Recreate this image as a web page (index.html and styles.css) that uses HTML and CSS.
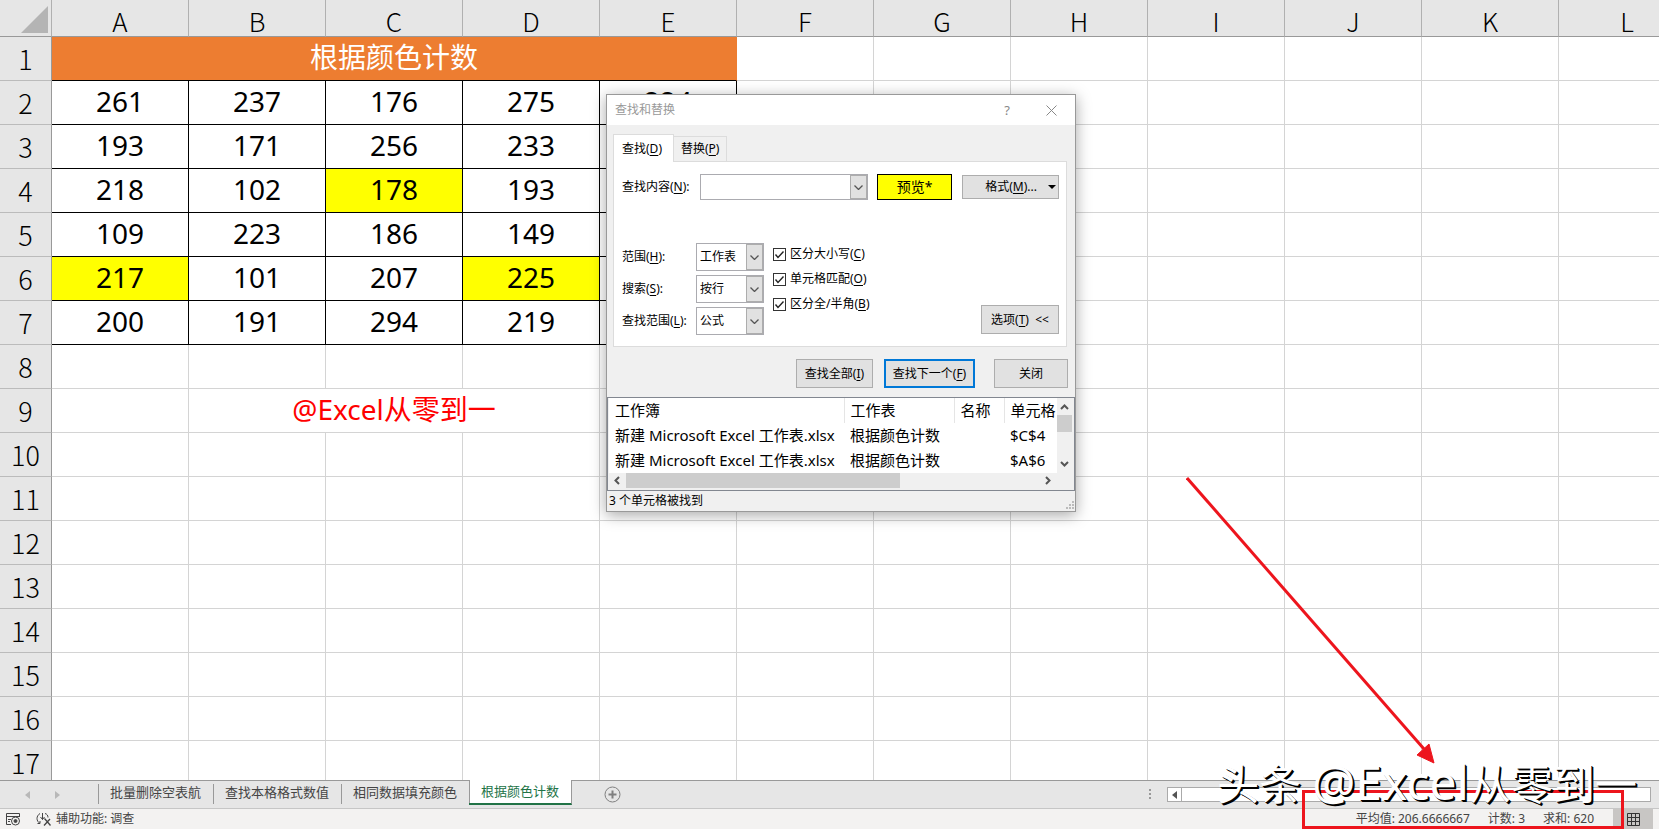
FILE: index.html
```html
<!DOCTYPE html>
<html lang="zh-CN">
<head>
<meta charset="utf-8">
<title>根据颜色计数</title>
<link rel="stylesheet" href="styles.css">
</head>
<body>
<div class="app">
  <main class="sheet">
    <table class="grid">
      <colgroup><col class="col-head"><col span="12" class="col-data"></colgroup>
      <thead>
        <tr>
          <th class="corner"><svg width="51" height="36" viewBox="0 0 51 36" aria-hidden="true"><path d="M48 6V33H21Z" fill="#b4b4b4"/></svg></th>
          <th>A</th><th>B</th><th>C</th><th>D</th><th>E</th><th>F</th><th>G</th><th>H</th><th>I</th><th>J</th><th>K</th><th>L</th>
        </tr>
      </thead>
      <tbody>
        <tr><th>1</th><td colspan="5" class="title">根据颜色计数</td><td></td><td></td><td></td><td></td><td></td><td></td><td></td></tr>
        <tr class="data"><th>2</th><td>261</td><td>237</td><td>176</td><td>275</td><td>224</td><td></td><td></td><td></td><td></td><td></td><td></td><td></td></tr>
        <tr class="data"><th>3</th><td>193</td><td>171</td><td>256</td><td>233</td><td></td><td></td><td></td><td></td><td></td><td></td><td></td><td></td></tr>
        <tr class="data"><th>4</th><td>218</td><td>102</td><td class="hit">178</td><td>193</td><td></td><td></td><td></td><td></td><td></td><td></td><td></td><td></td></tr>
        <tr class="data"><th>5</th><td>109</td><td>223</td><td>186</td><td>149</td><td></td><td></td><td></td><td></td><td></td><td></td><td></td><td></td></tr>
        <tr class="data"><th>6</th><td class="hit">217</td><td>101</td><td>207</td><td class="hit">225</td><td></td><td></td><td></td><td></td><td></td><td></td><td></td><td></td></tr>
        <tr class="data"><th>7</th><td>200</td><td>191</td><td>294</td><td>219</td><td></td><td></td><td></td><td></td><td></td><td></td><td></td><td></td></tr>
        <tr><th>8</th><td></td><td></td><td></td><td></td><td></td><td></td><td></td><td></td><td></td><td></td><td></td><td></td></tr>
        <tr><th>9</th><td></td><td colspan="3" class="author">@Excel从零到一</td><td></td><td></td><td></td><td></td><td></td><td></td><td></td><td></td></tr>
        <tr><th>10</th><td></td><td></td><td></td><td></td><td></td><td></td><td></td><td></td><td></td><td></td><td></td><td></td></tr>
        <tr><th>11</th><td></td><td></td><td></td><td></td><td></td><td></td><td></td><td></td><td></td><td></td><td></td><td></td></tr>
        <tr><th>12</th><td></td><td></td><td></td><td></td><td></td><td></td><td></td><td></td><td></td><td></td><td></td><td></td></tr>
        <tr><th>13</th><td></td><td></td><td></td><td></td><td></td><td></td><td></td><td></td><td></td><td></td><td></td><td></td></tr>
        <tr><th>14</th><td></td><td></td><td></td><td></td><td></td><td></td><td></td><td></td><td></td><td></td><td></td><td></td></tr>
        <tr><th>15</th><td></td><td></td><td></td><td></td><td></td><td></td><td></td><td></td><td></td><td></td><td></td><td></td></tr>
        <tr><th>16</th><td></td><td></td><td></td><td></td><td></td><td></td><td></td><td></td><td></td><td></td><td></td><td></td></tr>
        <tr><th>17</th><td></td><td></td><td></td><td></td><td></td><td></td><td></td><td></td><td></td><td></td><td></td><td></td></tr>
      </tbody>
    </table>
  </main>

  <nav class="tabs">
    <div class="tab-arrows">
      <svg width="5" height="8" viewBox="0 0 5 8" aria-hidden="true"><path d="M5 0V8L0 4Z" fill="#b8b8b8"/></svg>
      <svg width="5" height="8" viewBox="0 0 5 8" aria-hidden="true"><path d="M0 0V8L5 4Z" fill="#b8b8b8"/></svg>
    </div>
    <button class="tab">批量删除空表航</button>
    <button class="tab">查找本格格式数值</button>
    <button class="tab">相同数据填充颜色</button>
    <button class="tab active">根据颜色计数</button>
    <button class="add" aria-label="新工作表"><svg width="17" height="17" viewBox="0 0 17 17" fill="none" stroke="#808080"><circle cx="8.500" cy="8.500" r="7.500"/><path d="M8.500 4.500V12.500M4.500 8.500H12.500" stroke-width="2"/></svg></button>
    <div class="hscroll">
      <svg width="3" height="11" viewBox="0 0 3 11" fill="#999" aria-hidden="true"><path d="M0 0h2v2H0zM0 4h2v2H0zM0 8h2v2H0z"/></svg>
      <div class="hscroll-bar">
        <button class="hscroll-left" aria-label="向左滚动"><svg width="5" height="8" viewBox="0 0 5 8"><path d="M5 0V8L0 4Z" fill="#555"/></svg></button>
      </div>
    </div>
  </nav>

  <footer class="status">
    <svg class="record" width="15" height="13" viewBox="0 0 15 13" fill="none" stroke="#444" aria-hidden="true"><path d="M5 11.500H.5V.5H13.500V4M.5 3.500H13M2 6.500H5M2 8.500H4"/><circle cx="9.500" cy="8" r="4"/><circle cx="9.500" cy="8" r="1.500" fill="#444"/></svg>
    <svg class="access" width="16" height="15" viewBox="0 0 16 15" fill="none" stroke="#444" aria-hidden="true"><path d="M4 1.500C0 4 0 9 4 11.500M4 11.500H1.500M4 11.500V9M6.500 1V7.500M4.500 5L6.500 7.500L8.500 5M9 1.500C11 2 12 3.500 12 5.500"/><path d="M8.500 6.500L14.500 13.500M14 7L8 13.500" stroke-width="1.300"/></svg>
    <span>辅助功能: 调查</span>
    <div class="stats"><span>平均值: 206.6666667</span><span>计数: 3</span><span>求和: 620</span></div>
    <button class="view" aria-label="普通视图"><svg width="13" height="13" viewBox="0 0 13 13" fill="none" stroke="#333"><path d="M.5 .5H12.500V12.500H.5ZM.5 4.500H12.500M.5 8.500H12.500M4.500 .5V12.500M8.500 .5V12.500"/></svg></button>
  </footer>

  <section class="dialog" role="dialog" aria-label="查找和替换">
    <header class="dlg-title">
      <span>查找和替换</span>
      <button aria-label="帮助">?</button>
      <button aria-label="关闭窗口"><svg width="11" height="11" viewBox="0 0 11 11" stroke="#888"><path d="M.5 .5L10.500 10.500M10.500 .5L.5 10.500"/></svg></button>
    </header>
    <div class="dlg-tabs">
      <button class="dlg-tab on">查找(<u>D</u>)</button>
      <button class="dlg-tab">替换(<u>P</u>)</button>
    </div>
    <div class="panel">
      <div class="find-row">
        <label for="what">查找内容(<u>N</u>):</label>
        <div class="combo wide"><input id="what" type="text"><button aria-label="展开"><svg width="9" height="5" viewBox="0 0 9 5" fill="none" stroke="#555" stroke-width="1.300"><path d="M.5 .5L4.500 4.500L8.500 .5"/></svg></button></div>
        <div class="preview">预览*</div>
        <button class="btn format"><span>格式(<u>M</u>)...</span><svg width="8" height="4" viewBox="0 0 8 4" aria-hidden="true"><path d="M0 0H8L4 4Z"/></svg></button>
      </div>
      <div class="options">
        <div class="fields">
          <label for="within">范围(<u>H</u>):</label>
          <div class="combo"><select id="within"><option>工作表</option></select><span class="chev"><svg width="9" height="5" viewBox="0 0 9 5" fill="none" stroke="#555" stroke-width="1.300"><path d="M.5 .5L4.500 4.500L8.500 .5"/></svg></span></div>
          <label for="search">搜索(<u>S</u>):</label>
          <div class="combo"><select id="search"><option>按行</option></select><span class="chev"><svg width="9" height="5" viewBox="0 0 9 5" fill="none" stroke="#555" stroke-width="1.300"><path d="M.5 .5L4.500 4.500L8.500 .5"/></svg></span></div>
          <label for="lookin">查找范围(<u>L</u>):</label>
          <div class="combo"><select id="lookin"><option>公式</option></select><span class="chev"><svg width="9" height="5" viewBox="0 0 9 5" fill="none" stroke="#555" stroke-width="1.300"><path d="M.5 .5L4.500 4.500L8.500 .5"/></svg></span></div>
        </div>
        <div class="checks">
          <label><span class="tick"><input type="checkbox" checked><svg width="13" height="13" viewBox="0 0 13 13" fill="none" stroke="#222" stroke-width="1.400"><path d="M2.500 6.500L5 9.500L10.500 3.500"/></svg></span>区分大小写(<u>C</u>)</label>
          <label><span class="tick"><input type="checkbox" checked><svg width="13" height="13" viewBox="0 0 13 13" fill="none" stroke="#222" stroke-width="1.400"><path d="M2.500 6.500L5 9.500L10.500 3.500"/></svg></span>单元格匹配(<u>O</u>)</label>
          <label><span class="tick"><input type="checkbox" checked><svg width="13" height="13" viewBox="0 0 13 13" fill="none" stroke="#222" stroke-width="1.400"><path d="M2.500 6.500L5 9.500L10.500 3.500"/></svg></span>区分全/半角(<u>B</u>)</label>
        </div>
        <button class="btn toggle"><span>选项(<u>T</u>)  &lt;&lt;</span></button>
      </div>
    </div>
    <div class="actions">
      <button class="btn all"><span>查找全部(<u>I</u>)</span></button>
      <button class="btn next"><span>查找下一个(<u>F</u>)</span></button>
      <button class="btn close">关闭</button>
    </div>
    <div class="results">
      <table>
        <thead><tr><th class="c-book">工作簿</th><th class="c-sheet">工作表</th><th class="c-name">名称</th><th>单元格</th></tr></thead>
        <tbody>
          <tr><td>新建 Microsoft Excel 工作表.xlsx</td><td>根据颜色计数</td><td></td><td>$C$4</td></tr>
          <tr><td>新建 Microsoft Excel 工作表.xlsx</td><td>根据颜色计数</td><td></td><td>$A$6</td></tr>
        </tbody>
      </table>
      <div class="vbar">
        <svg width="9" height="6" viewBox="0 0 9 6" fill="none" stroke="#555" stroke-width="2"><path d="M1 5L4.500 1.500L8 5"/></svg>
        <div class="vthumb"></div>
        <svg class="down" width="9" height="6" viewBox="0 0 9 6" fill="none" stroke="#555" stroke-width="2"><path d="M1 1L4.500 4.500L8 1"/></svg>
      </div>
      <div class="hbar">
        <svg width="6" height="9" viewBox="0 0 6 9" fill="none" stroke="#555" stroke-width="2"><path d="M5 1L1.500 4.500L5 8"/></svg>
        <div class="hthumb"></div>
        <svg class="right" width="6" height="9" viewBox="0 0 6 9" fill="none" stroke="#555" stroke-width="2"><path d="M1 1L4.500 4.500L1 8"/></svg>
      </div>
    </div>
    <div class="dlg-status"><span>3 个单元格被找到</span><svg width="8" height="8" viewBox="0 0 8 8" fill="#bbb" aria-hidden="true"><path d="M6 0h2v2H6zM3 3h2v2H3zM6 3h2v2H6zM0 6h2v2H0zM3 6h2v2H3zM6 6h2v2H6z"/></svg></div>
  </section>

  <svg class="arrow" width="252" height="288" viewBox="0 0 252 288" aria-hidden="true"><path d="M1 1L238 272" stroke="#ed151d" stroke-width="3"/><path d="M248 286L231 278L243 267Z" fill="#ed151d" stroke="#ed151d"/></svg>
  <div class="callout"></div>
  <div class="watermark">头条 <span>@Excel</span>从零到一</div>
</div>
</body>
</html>
```
FILE: styles.css
```css
* { box-sizing: border-box; }
body {
  margin: 0;
  font: 12px/16px "Noto Sans", "Noto Sans CJK SC", sans-serif;
  color: #000;
}
button, input, select { font: inherit; color: inherit; margin: 0; padding: 0; border: 0; border-radius: 0; background: none; }
svg { display: block; flex: none; }

.app { position: relative; display: flex; flex-direction: column; height: 100vh; overflow: hidden; }

/* Worksheet */
.sheet { flex: 1; min-height: 0; overflow: hidden; background: #fff; }
.grid { table-layout: fixed; width: 1696px; border-collapse: separate; border-spacing: 0; font-size: 28px; line-height: 40px; }
.col-head { width: 52px; }
.col-data { width: 137px; }
.grid th {
  padding: 0;
  background: #e6e6e6;
  font-family: "Noto Sans CJK SC", sans-serif;
  font-weight: 300;
  font-size: 27px;
  line-height: 36px;
  border-right: 1px solid #999;
  border-bottom: 1px solid #bbb;
}
.grid thead th { height: 37px; padding-top: 5px; font-size: 26px; line-height: 31px; border-bottom-color: #999; border-right-color: #b0b0b0; }
.grid thead .corner { padding: 0; }
.grid tbody tr { height: 44px; }
.grid td { padding: 0 0 3px; text-align: center; border-right: 1px solid #d4d4d4; border-bottom: 1px solid #d4d4d4; }
.grid .title { background: #ed7d31; color: #fff; border-color: #000; border-right-color: #ed7d31; }
.grid .data td:nth-child(-n+6) { border-color: #000; }
.grid .hit { background: #ff0; }
.grid .author { color: #f00; }

/* Sheet tabs */
.tabs { display: flex; height: 29px; background: #e6e6e6; border-top: 1px solid #999; border-bottom: 1px solid #c6c6c6; }
.tab-arrows { display: flex; gap: 25px; align-items: center; width: 98px; padding-left: 25px; }
.tab { position: relative; height: 24px; padding: 0 12px 2px; font-size: 13px; line-height: 20px; color: #444; white-space: nowrap; }
.tab::before { content: ""; position: absolute; left: 0; top: 3px; height: 20px; border-left: 1px solid #999; }
.tab.active { background: #fff; color: #217346; border-bottom: 2px solid #217346; border-right: 1px solid #999; margin-top: -1px; height: 25px; }
.tab.active::before { top: 0; height: 23px; }
.add { margin: 5px 0 0 32px; align-self: flex-start; }
.hscroll { display: flex; align-items: center; gap: 15px; width: 510px; margin-left: auto; }
.hscroll-bar { flex: 1; height: 15px; margin-right: 8px; border: 1px solid #aaa; background: #fff; }
.hscroll-left { display: flex; align-items: center; justify-content: center; width: 14px; height: 13px; border-right: 1px solid #aaa; }

/* Status bar */
.status { display: flex; align-items: center; height: 20px; background: #f3f2f1; color: #444; white-space: nowrap; }
.record { margin-left: 6px; }
.access { margin: 0 4px 0 15px; }
.stats { display: flex; gap: 18px; margin-left: auto; }
.view { display: flex; align-items: center; justify-content: center; width: 40px; height: 20px; margin: 0 6px 0 19px; background: #c8c6c4; }

/* Find and replace window */
.dialog {
  position: absolute; left: 606px; top: 94px; width: 470px;
  background: #f0f0f0; border: 1px solid #999;
  box-shadow: 0 3px 14px rgba(0,0,0,.35);
}
.dialog u { text-underline-offset: 2px; }
.dlg-title { display: flex; align-items: center; height: 30px; padding: 0 18px 0 8px; background: #fff; color: #999; }
.dlg-title button { margin-left: 36px; }
.dlg-title span + button { margin-left: auto; font-size: 13px; color: #888; }
.dlg-tabs { display: flex; align-items: flex-end; height: 37px; padding-left: 6px; margin-bottom: -1px; }
.dlg-tab { position: relative; height: 26px; padding: 0 7px; border: 1px solid #dcdcdc; border-left: 0; }
.dlg-tab.on { height: 28px; padding: 0 11px 0 8px; border-left: 1px solid #dcdcdc; border-bottom: 0; background: #fff; }
.panel { margin: 0 8px 0 6px; padding: 12px 7px 12px 8px; height: 186px; background: #fff; border: 1px solid #dcdcdc; }
.find-row { display: flex; align-items: center; height: 26px; }
.find-row label { flex: 1; }
.btn { display: flex; align-items: center; justify-content: center; height: 29px; background: #e1e1e1; border: 1px solid #adadad; white-space: pre; }
.combo { display: grid; grid-template-columns: 1fr 17px; width: 68px; height: 28px; background: #fff; border: 1px solid #ababb0; }
.combo.wide { width: 168px; height: 26px; }
.combo input { width: 100%; min-width: 0; padding: 0 4px; }
.combo select { grid-area: 1 / 1 / 2 / 3; appearance: none; padding: 0 3px; }
.combo button, .chev { grid-area: 1 / 2; display: flex; align-items: center; justify-content: center; background: #e1e1e1; border: 1px solid #adadad; pointer-events: none; }
.preview { width: 75px; height: 26px; margin: 0 10px 0 9px; background: #ff0; border: 1px solid #000; text-align: center; font-size: 14px; line-height: 24px; }
.format { width: 97px; height: 24px; padding-right: 2px; gap: 11px; justify-content: flex-end; }
.options { display: flex; align-items: flex-start; padding-top: 43px; }
.fields { display: grid; grid-template-columns: 74px 68px; row-gap: 4px; align-items: center; }
.checks { display: grid; row-gap: 9px; margin: 3px 0 0 9px; }
.checks label { display: flex; align-items: center; white-space: nowrap; }
.tick { display: grid; margin-right: 4px; }
.tick input { appearance: none; grid-area: 1 / 1; width: 13px; height: 13px; border: 1px solid #333; background: #fff; }
.tick svg { grid-area: 1 / 1; z-index: 1; pointer-events: none; }
.toggle { width: 78px; margin: 62px 0 0 auto; }
.actions { display: flex; justify-content: flex-end; padding: 12px 7px 9px; }
.all { width: 77px; }
.next { width: 91px; margin: 0 19px 0 11px; border: 2px solid #0078d7; }
.close { width: 74px; }
.results { display: grid; grid-template-columns: 1fr 15px; grid-template-rows: auto 15px; padding: 0 2px 2px 1px; background: #f0f0f0; border: 1px solid #828790; font-size: 15px; line-height: 25px; }
.results table { table-layout: fixed; width: 100%; border-collapse: collapse; background: #fff; }
.results th, .results td { padding: 0 0 0 6px; text-align: left; font-weight: 400; white-space: nowrap; overflow: hidden; }
.results th { border-right: 1px solid #e5e5e5; }
.results th:last-child { border-right: 0; }
.c-book { width: 235px; }
.c-sheet { width: 110px; }
.c-name { width: 50px; }
.vbar { display: flex; flex-direction: column; align-items: center; padding: 6px 0; }
.vthumb { width: 15px; height: 17px; margin-top: 5px; background: #cdcdcd; }
.down { margin-top: auto; }
.hbar { display: flex; align-items: center; padding: 0 6px 0 5px; }
.hthumb { width: 274px; height: 15px; margin-left: 6px; background: #cdcdcd; }
.right { margin-left: auto; }
.dlg-status { display: flex; justify-content: space-between; align-items: flex-end; height: 20px; padding: 0 1px 2px 2px; }

/* Annotations over the sheet */
.arrow { position: absolute; left: 1186px; top: 477px; pointer-events: none; }
.callout { position: absolute; right: 35px; bottom: 0; width: 322px; height: 39px; border: 3px solid #ed151d; pointer-events: none; }
.watermark {
  position: absolute; right: 22px; bottom: 15px; font-size: 42px; line-height: 60px; white-space: nowrap; pointer-events: none;
  color: #fff;
  text-shadow: 2px 2px 0 #000, 1px 1px 0 #000;
}
.watermark span { font-size: 48px; }
```
